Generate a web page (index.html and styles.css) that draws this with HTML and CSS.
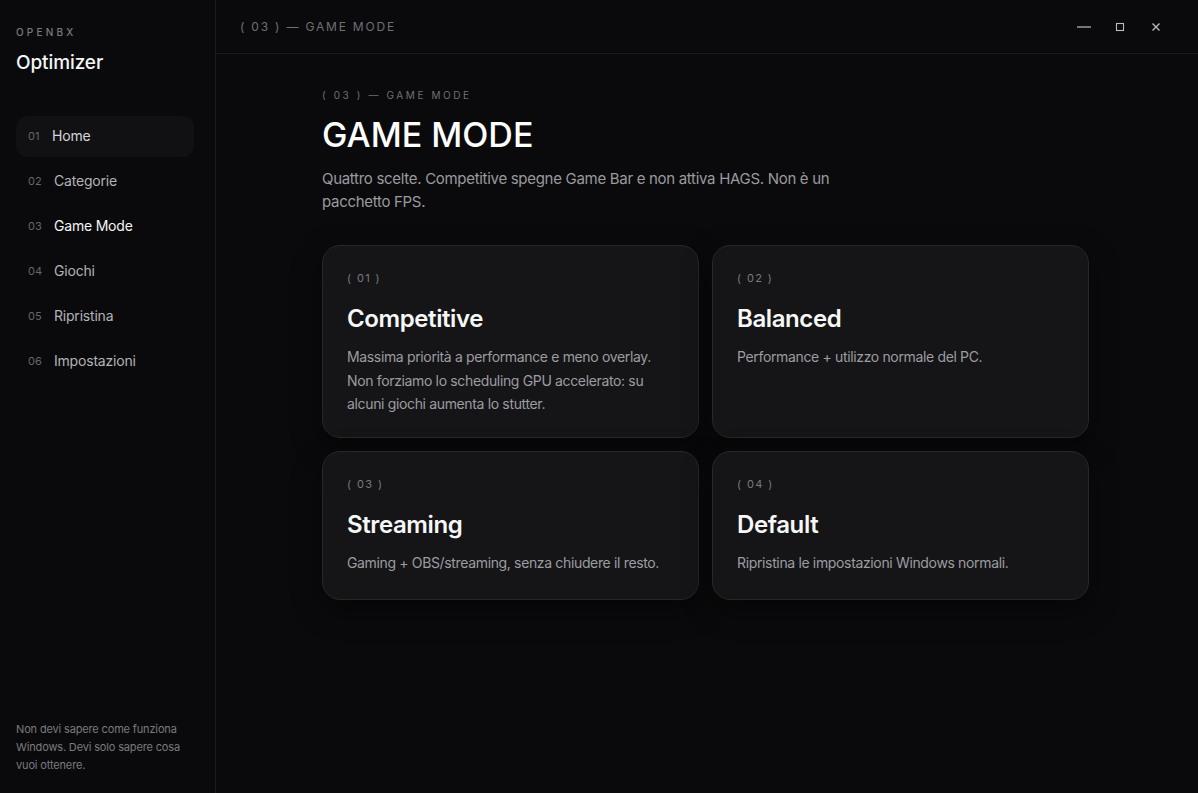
FILE: index.html
```html
<!DOCTYPE html>
<html lang="it">
<head>
<meta charset="utf-8">
<title>OpenBX Optimizer</title>
<link rel="stylesheet" href="styles.css">
</head>
<body>
<div class="app">
  <aside class="sidebar">
    <div class="brand">
      <div class="brand-kicker">OPENBX</div>
      <div class="brand-name">Optimizer</div>
    </div>
    <nav class="nav">
      <a class="nav-item is-hover"><span class="nav-num">01</span><span class="nav-label">Home</span></a>
      <a class="nav-item"><span class="nav-num">02</span><span class="nav-label">Categorie</span></a>
      <a class="nav-item is-active"><span class="nav-num">03</span><span class="nav-label">Game Mode</span></a>
      <a class="nav-item"><span class="nav-num">04</span><span class="nav-label">Giochi</span></a>
      <a class="nav-item"><span class="nav-num">05</span><span class="nav-label">Ripristina</span></a>
      <a class="nav-item"><span class="nav-num">06</span><span class="nav-label">Impostazioni</span></a>
    </nav>
    <p class="sidebar-foot">Non devi sapere come funziona Windows. Devi solo sapere cosa vuoi ottenere.</p>
  </aside>
  <div class="main">
    <header class="topbar">
      <div class="crumb">( 03 ) — GAME MODE</div>
      <div class="win-controls">
        <span class="win-btn"><svg width="14" height="10" viewBox="0 0 14 10"><line x1="0" y1="5" x2="14" y2="5" stroke="#bdbdc0" stroke-width="1.2"/></svg></span>
        <span class="win-btn"><svg width="10" height="10" viewBox="0 0 10 10"><rect x="1.5" y="1.5" width="7" height="7" fill="none" stroke="#bdbdc0" stroke-width="1.1"/></svg></span>
        <span class="win-btn"><svg width="10" height="10" viewBox="0 0 10 10"><path d="M1.5 1.5 L8.5 8.5 M8.5 1.5 L1.5 8.5" stroke="#bdbdc0" stroke-width="1.3"/></svg></span>
      </div>
    </header>
    <section class="content">
      <div class="kicker">( 03 ) — GAME MODE</div>
      <h1 class="title">GAME MODE</h1>
      <p class="lead">Quattro scelte. Competitive spegne Game Bar e non attiva HAGS. Non è un pacchetto FPS.</p>
      <div class="cards">
        <article class="card">
          <div class="card-num">( 01 )</div>
          <h2 class="card-title">Competitive</h2>
          <p class="card-desc">Massima priorità a performance e meno overlay. Non forziamo lo scheduling GPU accelerato: su alcuni giochi aumenta lo stutter.</p>
        </article>
        <article class="card">
          <div class="card-num">( 02 )</div>
          <h2 class="card-title">Balanced</h2>
          <p class="card-desc">Performance + utilizzo normale del PC.</p>
        </article>
        <article class="card">
          <div class="card-num">( 03 )</div>
          <h2 class="card-title">Streaming</h2>
          <p class="card-desc">Gaming + OBS/streaming, senza chiudere il resto.</p>
        </article>
        <article class="card">
          <div class="card-num">( 04 )</div>
          <h2 class="card-title">Default</h2>
          <p class="card-desc">Ripristina le impostazioni Windows normali.</p>
        </article>
      </div>
    </section>
  </div>
</div>
</body>
</html>
```
FILE: styles.css
```css
* { box-sizing: border-box; }
html, body { margin: 0; padding: 0; height: 100%; }
body {
  background: #0a0a0c;
  color: #f2f2f3;
  font-family: Inter, "Noto Sans", "Liberation Sans", sans-serif;
  -webkit-font-smoothing: antialiased;
}
.app {
  display: flex;
  height: 793px;
  overflow: hidden;
}
.sidebar {
  width: 216px;
  flex: 0 0 216px;
  border-right: 1px solid #1b1b1e;
  display: flex;
  flex-direction: column;
  padding: 26px 21px 19px 16px;
}
.brand-kicker {
  font-size: 10px;
  letter-spacing: 3.2px;
  color: #7a7a7e;
  line-height: 12px;
  font-weight: 500;
}
.brand-name {
  margin-top: 13px;
  font-size: 19px;
  font-weight: 500;
  letter-spacing: -0.1px;
  line-height: 24px;
  color: #f5f5f6;
}
.nav {
  margin-top: 41px;
  display: flex;
  flex-direction: column;
  gap: 4px;
}
.nav-item {
  display: flex;
  align-items: center;
  height: 41px;
  padding: 0 12px 2px;
  border-radius: 12px;
  color: #b3b3b7;
  font-size: 14px;
  letter-spacing: -0.2px;
}
.nav-item.is-hover { background: #111113; color: #d6d6d9; }
.nav-item.is-active { color: #f5f5f6; }
.nav-num {
  font-size: 11px;
  color: #66666b;
  width: 26px;
  letter-spacing: 0;
}
.nav-item.is-hover .nav-num { width: 24px; }
.sidebar-foot {
  margin: auto 0 0;
  font-size: 11px;
  line-height: 18px;
  color: #7a7a7e;
  letter-spacing: -0.15px;
}
.main {
  flex: 1;
  display: flex;
  flex-direction: column;
}
.topbar {
  height: 54px;
  flex: 0 0 54px;
  border-bottom: 1px solid #1b1b1e;
  display: flex;
  align-items: center;
  justify-content: space-between;
  padding: 0 35px 0 24px;
}
.crumb {
  font-size: 12px;
  letter-spacing: 1.8px;
  color: #6f6f74;
}
.win-controls {
  display: flex;
  align-items: center;
  gap: 22px;
}
.win-btn {
  display: flex;
  align-items: center;
  justify-content: center;
  width: 14px;
  height: 14px;
}
.content {
  padding: 34px 0 0 106px;
  width: 873px;
}
.kicker {
  font-size: 10px;
  letter-spacing: 2.6px;
  color: #6f6f74;
  line-height: 14px;
}
.title {
  margin: 13px 0 0;
  font-size: 34px;
  line-height: 40px;
  font-weight: 500;
  letter-spacing: 0;
  color: #ffffff;
}
.lead {
  margin: 12px 0 0;
  max-width: 530px;
  font-size: 15px;
  line-height: 23px;
  color: #9a9a9f;
  letter-spacing: -0.3px;
}
.cards {
  margin-top: 32px;
  display: grid;
  grid-template-columns: 377px 377px;
  gap: 13px;
}
.card {
  min-height: 149px;
  background: #151517;
  border: 1px solid #27272a;
  border-radius: 18px;
  padding: 25px 24px 21px 24px;
  box-shadow: 0 10px 30px rgba(0,0,0,0.45);
}
.card-num {
  font-size: 11px;
  letter-spacing: 1.4px;
  color: #7a7a7e;
  line-height: 14px;
}
.card-title {
  margin: 19px 0 0;
  font-size: 24px;
  line-height: 30px;
  font-weight: 600;
  letter-spacing: -0.4px;
  color: #f7f7f8;
}
.card-desc {
  margin: 11px 0 0;
  font-size: 14px;
  line-height: 23.5px;
  color: #9c9ca1;
  letter-spacing: -0.35px;
}
```
